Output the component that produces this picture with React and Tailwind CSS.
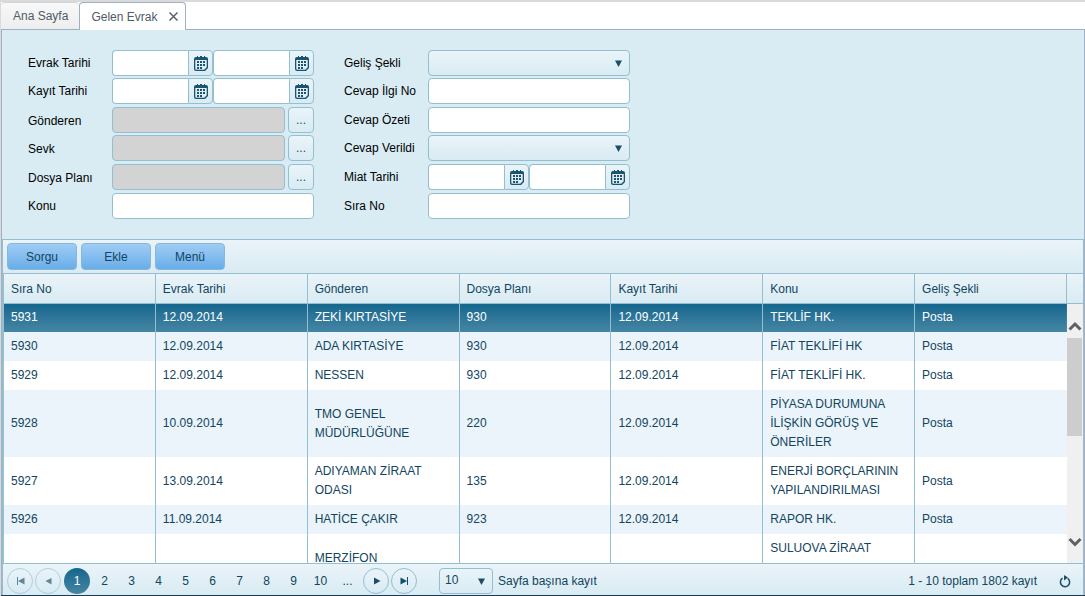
import React, { useState } from 'react';

const COLUMNS = ['Sıra No', 'Evrak Tarihi', 'Gönderen', 'Dosya Planı', 'Kayıt Tarihi', 'Konu', 'Geliş Şekli'];

const ROWS = [
    ['5931', '12.09.2014', 'ZEKİ KIRTASİYE', '930', '12.09.2014', 'TEKLİF HK.', 'Posta'],
    ['5930', '12.09.2014', 'ADA KIRTASİYE', '930', '12.09.2014', 'FİAT TEKLİFİ HK', 'Posta'],
    ['5929', '12.09.2014', 'NESSEN', '930', '12.09.2014', 'FİAT TEKLİFİ HK.', 'Posta'],
    ['5928', '10.09.2014', 'TMO GENEL MÜDÜRLÜĞÜNE', '220', '12.09.2014', 'PİYASA DURUMUNA İLİŞKİN GÖRÜŞ VE ÖNERİLER', 'Posta'],
    ['5927', '13.09.2014', 'ADIYAMAN ZİRAAT ODASI', '135', '12.09.2014', 'ENERJİ BORÇLARININ YAPILANDIRILMASI', 'Posta'],
    ['5926', '11.09.2014', 'HATİCE ÇAKIR', '923', '12.09.2014', 'RAPOR HK.', 'Posta'],
];

const PAGES = [1, 2, 3, 4, 5, 6, 7, 8, 9, 10];

const BOX = 'h-[26px] min-w-0 rounded-[4px] border border-[#93bfd1] outline-none';
const SOFT = 'bg-linear-to-b from-[#eaf4f9] to-[#d9ebf3]';
const CELL = 'border-[#93bfd1] px-[7px] leading-[19px]';

const CalendarIcon = () => (
    <svg width="14" height="15" viewBox="0 0 14 15" fill="#1b5470">
        <path fillRule="evenodd" d="M2 1h1V0h1v1h2V0h2v1h2V0h1v1h1q2 0 2 2v9l-3 3H2q-2 0-2-2V3q0-2 2-2zM1.300 4v8.700q0 1 1 1H10.200l2.500-2.500V4z" />
        <path d="M3 5h2v2H3zM6 5h2v2H6zM9 5h2v2H9zM3 8h2v2H3zM6 8h2v2H6zM9 8h2v2H9zM3 11h2v2H3zM6 11h2v2H6z" />
    </svg>
);

const DownArrow = () => (
    <svg className="pointer-events-none absolute right-2 top-[10px]" width="7" height="7" viewBox="0 0 7 7" fill="#174f6b">
        <path d="M0 0.500h7L3.500 7z" />
    </svg>
);

const DateField = ({ id, label }) => (
    <div className="flex flex-1">
        <input id={id} aria-label={label} type="text" className={`${BOX} w-0 flex-1 rounded-r-none border-r-0 bg-white px-1`} />
        <button type="button" aria-label={`${label} seç`} className={`${BOX} ${SOFT} flex w-[25px] items-center justify-center rounded-l-none`}>
            <CalendarIcon />
        </button>
    </div>
);

const Field = ({ id, label, type }) => {
    if (type === 'date') {
        return (
            <div className="flex">
                <DateField id={id} label={label} />
                <DateField id={`${id}-son`} label={`${label} son`} />
            </div>
        );
    }
    if (type === 'lookup') {
        return (
            <div className="flex gap-[3px]">
                <input id={id} type="text" readOnly className={`${BOX} flex-1 bg-[#d3d3d3] px-1`} />
                <button type="button" aria-label={`${label} seç`} className={`${BOX} ${SOFT} w-[26px] text-[#1b4f6b]`}>...</button>
            </div>
        );
    }
    if (type === 'select') {
        return (
            <div className="relative">
                <select id={id} className={`${BOX} ${SOFT} block w-full appearance-none px-2`}>
                    <option></option>
                </select>
                <DownArrow />
            </div>
        );
    }
    return <input id={id} type="text" className={`${BOX} w-full bg-white px-1`} />;
};

// left and right field of each form row
const FIELDS = [
    { id: 'evrak-tarihi', label: 'Evrak Tarihi', type: 'date' },
    { id: 'gelis-sekli', label: 'Geliş Şekli', type: 'select' },
    { id: 'kayit-tarihi', label: 'Kayıt Tarihi', type: 'date' },
    { id: 'cevap-ilgi', label: 'Cevap İlgi No', type: 'text' },
    { id: 'gonderen', label: 'Gönderen', type: 'lookup' },
    { id: 'cevap-ozeti', label: 'Cevap Özeti', type: 'text' },
    { id: 'sevk', label: 'Sevk', type: 'lookup' },
    { id: 'cevap-verildi', label: 'Cevap Verildi', type: 'select' },
    { id: 'dosya-plani', label: 'Dosya Planı', type: 'lookup' },
    { id: 'miat-tarihi', label: 'Miat Tarihi', type: 'date' },
    { id: 'konu', label: 'Konu', type: 'text' },
    { id: 'sira-no', label: 'Sıra No', type: 'text' },
];

const Tabs = () => (
    <div className="flex h-[27px] text-[#4f5b66]">
        <button className="h-full rounded-t-[4px] border-t border-[#d0d3d8] bg-linear-to-b from-[#f8f8f8] to-[#eeeeee] pl-3 pr-[11px]">Ana Sayfa</button>
        <div className="flex h-[28px] items-center gap-3 rounded-t-[4px] border-x border-t border-[#9fb0c2] bg-white pl-[11px] pr-[7px]">
            <button>Gelen Evrak</button>
            <button aria-label="Kapat">
                <svg width="9" height="9" viewBox="0 0 9 9" stroke="#59636d" strokeWidth="1.500"><path d="M.5.5l8 8M8.500.5l-8 8" /></svg>
            </button>
        </div>
    </div>
);

const SearchForm = () => (
    <form className="grid grid-cols-[84px_202px_84px_202px] grid-rows-[28px_29px_28px_29px_29px_26px] px-[26px] py-5">
        {FIELDS.map((f, i) => (
            <React.Fragment key={f.id}>
                <label htmlFor={f.id} className={`text-black ${f.type === 'lookup' ? 'pt-[6px]' : 'pt-[5px]'} ${i % 2 ? 'ml-[30px] w-[84px]' : ''}`}>{f.label}</label>
                <div className={i % 2 ? 'ml-[30px] -mr-[30px]' : ''}><Field {...f} /></div>
            </React.Fragment>
        ))}
    </form>
);

const DataTable = ({ selected, onSelect }) => (
    <div className="border-l border-[#93bfd1]">
        <div className={`flex h-[30px] border-t border-[#93bfd1] ${SOFT}`}>
            <table className="w-full table-fixed border-separate border-spacing-0">
                <thead>
                    <tr>
                        {COLUMNS.map(c => (
                            <th key={c} className="h-[29px] border-r border-[#93bfd1] px-[7px] text-left font-normal">{c}</th>
                        ))}
                    </tr>
                </thead>
            </table>
            <div className="w-4 shrink-0" />
        </div>
        <div className="flex h-[260px] overflow-hidden bg-white">
            <div className="min-w-0 flex-1">
                <table className="w-full table-fixed border-separate border-spacing-0">
                    <tbody>
                        {ROWS.map((row, i) => (
                            <tr
                                key={i}
                                onClick={() => onSelect(i)}
                                className={i === selected ? 'bg-linear-to-b from-[#10668d] to-[#4586a4] text-white' : i % 2 ? 'bg-[#eaf4fa]' : 'bg-white'}
                            >
                                {row.map((cell, j) => (
                                    <td key={j} className={`${CELL} ${j < 6 ? 'border-r' : ''} ${i === 0 ? 'border-t pb-[5px] pt-1' : 'py-[5px]'}`}>{cell}</td>
                                ))}
                            </tr>
                        ))}
                        <tr>
                            <td className={`${CELL} border-r`} />
                            <td className={`${CELL} border-r`} />
                            <td className={`${CELL} border-r pb-6 pt-[5px]`}>MERZİFON</td>
                            <td className={`${CELL} border-r`} />
                            <td className={`${CELL} border-r`} />
                            <td className={`${CELL} border-r pb-[43px] pt-[5px]`}>SULUOVA ZİRAAT</td>
                            <td className={CELL} />
                        </tr>
                    </tbody>
                </table>
            </div>
            <div className="flex w-4 shrink-0 flex-col border-t border-[#93bfd1] bg-[#f0f0f0]">
                <svg className="mt-4" width="16" height="18" viewBox="0 0 16 18" fill="none" stroke="#606060" strokeWidth="3"><path d="M2.500 9.500L8 4l5.500 5.500" /></svg>
                <div className="mr-px h-[98px] bg-[#cdcdcd]" />
                <svg className="mb-3 mt-auto" width="16" height="18" viewBox="0 0 16 18" fill="none" stroke="#606060" strokeWidth="3"><path d="M2.500 6L8 11.500 13.500 6" /></svg>
            </div>
        </div>
    </div>
);

const RoundButton = ({ label, disabled, children }) => (
    <button aria-label={label} disabled={disabled} className={`flex size-[26px] items-center justify-center rounded-full border border-[#93bfd1] ${SOFT} ${disabled ? 'opacity-65' : ''}`}>
        <svg width="9" height="8" viewBox="0 0 9 8" fill="#174f6b">{children}</svg>
    </button>
);

const Pager = () => (
    <div className={`flex h-8 items-center border-t border-[#93bfd1] px-1 pt-[3px] ${SOFT}`}>
        <div className="flex gap-[2px]">
            <RoundButton label="İlk" disabled><path d="M1 0h1v8H1zM8.500 0.500v7L2 4z" /></RoundButton>
            <RoundButton label="Önceki" disabled><path d="M7.500 1v6.500L1.500 4z" /></RoundButton>
        </div>
        <div className="ml-[3px] flex h-[26px]">
            {PAGES.map(p => (
                <button key={p} className={p === 1 ? 'mr-px size-[26px] rounded-full bg-linear-to-b from-[#10668d] to-[#4586a4] text-white' : 'w-[27px]'}>{p}</button>
            ))}
            <span className="w-[27px] self-center text-center">...</span>
        </div>
        <div className="ml-[2px] flex gap-[2px]">
            <RoundButton label="Sonraki"><path d="M2 0.500v7L8.500 4z" /></RoundButton>
            <RoundButton label="Son"><path d="M0.500 0.500v7L7 4zM7 0h1v8H7z" /></RoundButton>
        </div>
        <div className="relative ml-[22px]">
            <select id="sayfa" className={`${BOX} ${SOFT} block w-[54px] appearance-none px-[5px] pb-[2px]`}>
                <option>10</option>
            </select>
            <DownArrow />
        </div>
        <label htmlFor="sayfa" className="ml-[5px]">Sayfa başına kayıt</label>
        <span className="ml-auto">1 - 10 toplam 1802 kayıt</span>
        <button aria-label="Yenile" className="ml-[22px] mr-2">
            <svg width="12" height="13" viewBox="0 0 12 13">
                <path d="M3.500 3.200A4.600 4.600 0 1 0 8.700 3.300" fill="none" stroke="#174f6b" strokeWidth="1.500" />
                <path d="M5 0l4 2.500L5 5.500z" fill="#174f6b" />
            </svg>
        </button>
    </div>
);

const App = () => {
    const [selected, setSelected] = useState(0);

    return (
        <div className="border-l border-t-2 border-[#dadada] bg-white font-['Liberation_Sans',Arial,sans-serif] text-[12px] leading-4 text-[#12455f]">
            <Tabs />
            <div className="border-x border-t border-[#9fb0c2] bg-[#d9ecf4]">
                <SearchForm />
                <div className="border-x border-t border-[#93bfd1]">
                    <div className={`flex h-[33px] gap-1 px-1 pt-[3px] ${SOFT}`}>
                        {['Sorgu', 'Ekle', 'Menü'].map(b => (
                            <button key={b} className="h-[27px] w-[70px] rounded-[4px] border border-[#86b8dc] bg-linear-to-b from-[#9fccf4] to-[#68ade9]">{b}</button>
                        ))}
                    </div>
                    <DataTable selected={selected} onSelect={setSelected} />
                    <Pager />
                </div>
            </div>
            <div className="h-px bg-[#1d3a50]" />
        </div>
    );
};

export default App;
